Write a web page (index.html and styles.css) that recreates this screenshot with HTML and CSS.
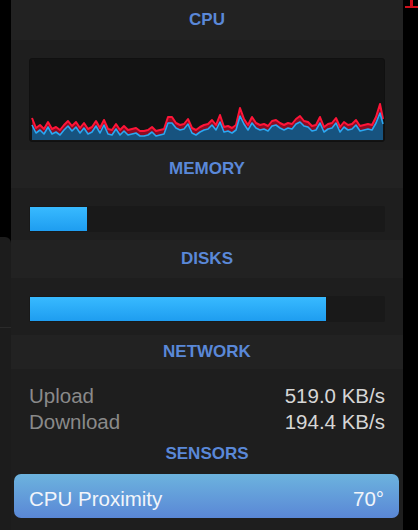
FILE: index.html
```html
<!DOCTYPE html>
<html>
<head>
<meta charset="utf-8">
<link rel="stylesheet" href="styles.css">
</head>
<body>
<div class="backwin"><div class="backwin-line"></div></div>
<div class="stray"><div class="stray-stem"></div><div class="stray-base"></div></div>
<div class="panel">
  <div class="head head-cpu">CPU</div>
  <div class="sec">
    <div class="chart">
      <svg width="354" height="82" viewBox="0 0 354 82">
        <polygon fill="#8c0c22" points="2,59 6,69 10,66 14,70 18,63 22,70 26,68 30,71 34,66 38,62 42,67 46,63 50,69 54,64 58,70 62,68 66,62 70,69 74,61 78,70 82,71 86,65 90,71 94,67 98,71 102,70 106,69 110,72 114,72 118,71 122,68 126,72 130,71 134,70 138,58 142,58 146,64 150,66 154,65 158,60 162,69 166,71 170,68 174,66 178,65 182,61 186,66 190,56 194,68 198,67 202,69 206,66 210,49 214,60 218,66 222,58 226,64 230,66 234,65 238,67 242,62 246,61 250,64 254,66 258,64 262,65 266,60 270,57 274,62 278,63 282,67 286,66 290,58 294,68 298,65 302,64 306,59 310,68 314,63 318,66 322,65 326,61 330,67 334,66 338,65 342,66 346,58 350,45 353,60 353,81 2,81"/>
        <polygon fill="#17537f" points="2,66 6,74 10,71 14,75 18,68 22,75 26,73 30,76 34,71 38,67 42,72 46,68 50,74 54,69 58,75 62,73 66,67 70,74 74,66 78,75 82,76 86,70 90,76 94,72 98,76 102,75 106,74 110,77 114,77 118,76 122,73 126,77 130,76 134,75 138,64 142,64 146,69 150,71 154,70 158,65 162,74 166,76 170,73 174,71 178,70 182,66 186,71 190,63 194,73 198,72 202,74 206,71 210,57 214,65 218,71 222,64 226,69 230,71 234,70 238,72 242,67 246,66 250,69 254,71 258,69 262,70 266,65 270,63 274,67 278,68 282,72 286,71 290,64 294,73 298,70 302,69 306,64 310,73 314,68 318,71 322,70 326,66 330,72 334,71 338,70 342,71 346,64 350,54 353,65 353,81 2,81"/>
        <polyline fill="none" stroke="#ff1538" stroke-width="2" stroke-linejoin="round" points="2,59 6,69 10,66 14,70 18,63 22,70 26,68 30,71 34,66 38,62 42,67 46,63 50,69 54,64 58,70 62,68 66,62 70,69 74,61 78,70 82,71 86,65 90,71 94,67 98,71 102,70 106,69 110,72 114,72 118,71 122,68 126,72 130,71 134,70 138,58 142,58 146,64 150,66 154,65 158,60 162,69 166,71 170,68 174,66 178,65 182,61 186,66 190,56 194,68 198,67 202,69 206,66 210,49 214,60 218,66 222,58 226,64 230,66 234,65 238,67 242,62 246,61 250,64 254,66 258,64 262,65 266,60 270,57 274,62 278,63 282,67 286,66 290,58 294,68 298,65 302,64 306,59 310,68 314,63 318,66 322,65 326,61 330,67 334,66 338,65 342,66 346,58 350,45 353,60"/>
        <polyline fill="none" stroke="#2aa8f2" stroke-width="1.6" stroke-linejoin="round" points="2,66 6,74 10,71 14,75 18,68 22,75 26,73 30,76 34,71 38,67 42,72 46,68 50,74 54,69 58,75 62,73 66,67 70,74 74,66 78,75 82,76 86,70 90,76 94,72 98,76 102,75 106,74 110,77 114,77 118,76 122,73 126,77 130,76 134,75 138,64 142,64 146,69 150,71 154,70 158,65 162,74 166,76 170,73 174,71 178,70 182,66 186,71 190,63 194,73 198,72 202,74 206,71 210,57 214,65 218,71 222,64 226,69 230,71 234,70 238,72 242,67 246,66 250,69 254,71 258,69 262,70 266,65 270,63 274,67 278,68 282,72 286,71 290,64 294,73 298,70 302,69 306,64 310,73 314,68 318,71 322,70 326,66 330,72 334,71 338,70 342,71 346,64 350,54 353,65"/>
      </svg>
    </div>
  </div>
  <div class="head">MEMORY</div>
  <div class="sec">
    <div class="bar"><div class="fill" style="width:16.1%"></div></div>
  </div>
  <div class="head">DISKS</div>
  <div class="sec sec-disks">
    <div class="bar"><div class="fill" style="width:83.6%"></div></div>
  </div>
  <div class="head head-net">NETWORK</div>
  <div class="net">
    <div class="row"><span class="label">Upload</span><span class="value">519.0 KB/s</span></div>
    <div class="row"><span class="label">Download</span><span class="value">194.4 KB/s</span></div>
  </div>
  <div class="head head-sensors">SENSORS</div>
  <div class="sensor"><span>CPU Proximity</span><span>70°</span></div>
</div>
</body>
</html>
```

FILE: styles.css
```css
html, body {
  margin: 0;
  padding: 0;
  background: #000;
  height: 530px;
  overflow: hidden;
  font-family: "Liberation Sans", Arial, sans-serif;
}

.backwin {
  position: absolute;
  left: 0;
  top: 237px;
  width: 11px;
  height: 293px;
  background: #1c1c1c;
  border-top-right-radius: 6px;
}

.backwin-line {
  margin-top: 90px;
  height: 1px;
  background: #2a2a2a;
}

.stray {
  position: absolute;
  left: 405px;
  top: 0;
  width: 13px;
  height: 8px;
}

.stray-stem {
  margin-left: 5px;
  width: 3px;
  height: 6px;
  background: #d0101c;
}

.stray-base {
  width: 13px;
  height: 2px;
  background: #d0101c;
}

.panel {
  position: relative;
  margin-left: 11px;
  width: 392px;
  height: 530px;
  background: #1e1e1e;
}

.head {
  height: 38px;
  display: flex;
  align-items: center;
  justify-content: center;
  background: #222222;
  color: #5a88d8;
  font-weight: bold;
  font-size: 17px;
}

.head-cpu {
  height: 40px;
}

.head-net {
  height: 34px;
}

.head-sensors {
  height: 38px;
  background: #1e1e1e;
}

.sec {
  padding: 18px 18px 8px;
}

.sec-disks {
  padding-bottom: 13px;
}

.chart {
  height: 82px;
  background: #131313;
  border: 1px solid #101010;
  border-radius: 3px;
  overflow: hidden;
}

.chart svg {
  display: block;
}

.bar {
  height: 24px;
  padding: 1px;
  background: #191919;
  border-radius: 2px;
}

.fill {
  height: 24px;
  background: linear-gradient(#38baff, #1e9df0);
}

.net {
  padding: 14px 18px 0;
}

.row {
  display: flex;
  justify-content: space-between;
  height: 26px;
  line-height: 26px;
  font-size: 20.5px;
}

.label {
  color: #8a8a8a;
}

.value {
  color: #d6d6d6;
}

.sensor {
  margin: 1px 4px 0 3px;
  height: 44px;
  box-sizing: border-box;
  padding: 6px 15px 0;
  display: flex;
  align-items: center;
  justify-content: space-between;
  border-radius: 7px;
  background: linear-gradient(#6cb3de, #5a87d6);
  color: #f2f5fa;
  font-size: 20.5px;
}
```
